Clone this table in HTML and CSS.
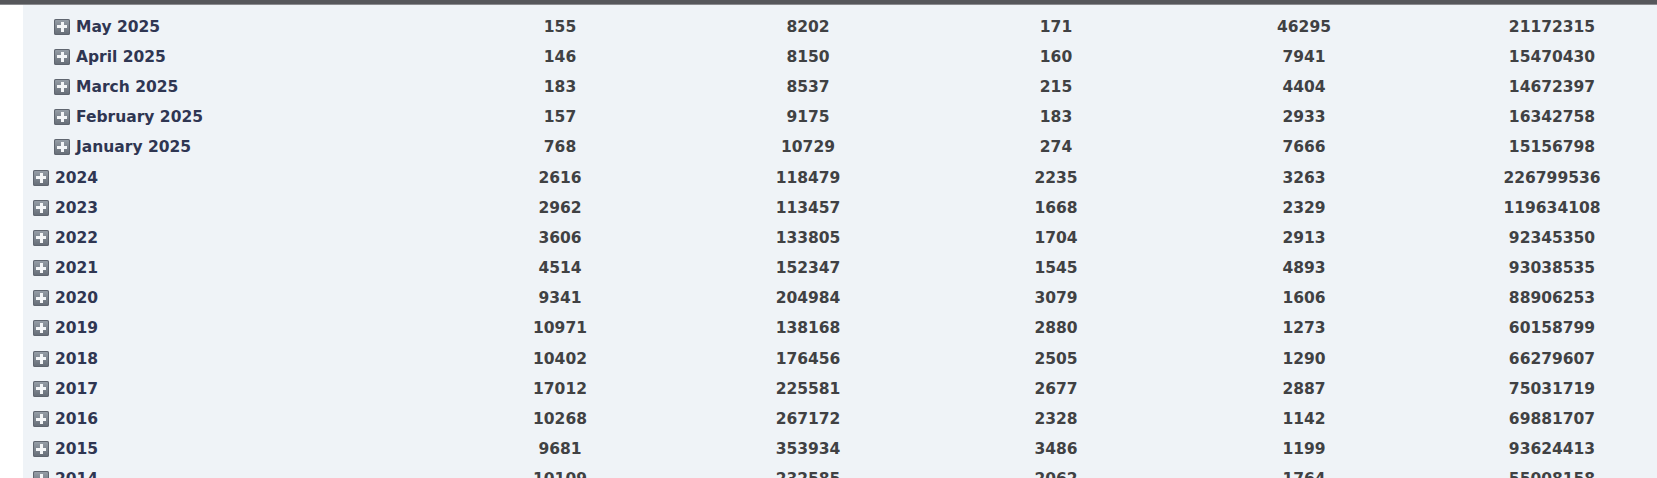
FILE: index.html
```html
<!DOCTYPE html>
<html>
<head>
<meta charset="utf-8">
<link rel="stylesheet" href="styles.css">
</head>
<body>
<div class="topbar"></div>
<div class="page">
  <div class="panel">
    <div class="row month"><div class="label"><span class="plus"></span>May 2025</div><div>155</div><div>8202</div><div>171</div><div>46295</div><div>21172315</div></div>
    <div class="row month"><div class="label"><span class="plus"></span>April 2025</div><div>146</div><div>8150</div><div>160</div><div>7941</div><div>15470430</div></div>
    <div class="row month"><div class="label"><span class="plus"></span>March 2025</div><div>183</div><div>8537</div><div>215</div><div>4404</div><div>14672397</div></div>
    <div class="row month"><div class="label"><span class="plus"></span>February 2025</div><div>157</div><div>9175</div><div>183</div><div>2933</div><div>16342758</div></div>
    <div class="row month"><div class="label"><span class="plus"></span>January 2025</div><div>768</div><div>10729</div><div>274</div><div>7666</div><div>15156798</div></div>
    <div class="row year"><div class="label"><span class="plus"></span>2024</div><div>2616</div><div>118479</div><div>2235</div><div>3263</div><div>226799536</div></div>
    <div class="row year"><div class="label"><span class="plus"></span>2023</div><div>2962</div><div>113457</div><div>1668</div><div>2329</div><div>119634108</div></div>
    <div class="row year"><div class="label"><span class="plus"></span>2022</div><div>3606</div><div>133805</div><div>1704</div><div>2913</div><div>92345350</div></div>
    <div class="row year"><div class="label"><span class="plus"></span>2021</div><div>4514</div><div>152347</div><div>1545</div><div>4893</div><div>93038535</div></div>
    <div class="row year"><div class="label"><span class="plus"></span>2020</div><div>9341</div><div>204984</div><div>3079</div><div>1606</div><div>88906253</div></div>
    <div class="row year"><div class="label"><span class="plus"></span>2019</div><div>10971</div><div>138168</div><div>2880</div><div>1273</div><div>60158799</div></div>
    <div class="row year"><div class="label"><span class="plus"></span>2018</div><div>10402</div><div>176456</div><div>2505</div><div>1290</div><div>66279607</div></div>
    <div class="row year"><div class="label"><span class="plus"></span>2017</div><div>17012</div><div>225581</div><div>2677</div><div>2887</div><div>75031719</div></div>
    <div class="row year"><div class="label"><span class="plus"></span>2016</div><div>10268</div><div>267172</div><div>2328</div><div>1142</div><div>69881707</div></div>
    <div class="row year"><div class="label"><span class="plus"></span>2015</div><div>9681</div><div>353934</div><div>3486</div><div>1199</div><div>93624413</div></div>
    <div class="row year"><div class="label"><span class="plus"></span>2014</div><div>10109</div><div>232585</div><div>2062</div><div>1764</div><div>55008158</div></div>
  </div>
</div>
</body>
</html>
```

FILE: styles.css
```css
html, body {
  margin: 0;
  padding: 0;
  background: #ffffff;
  overflow: hidden;
}
body {
  font-family: "DejaVu Sans", "Verdana", sans-serif;
  font-weight: bold;
  font-size: 15.5px;
}
.topbar {
  height: 4px;
  background: #56575b;
  border-bottom: 1px solid #8a8b8f;
}
.page {
  padding-left: 23px;
}
.panel {
  background: #eff3f7;
  padding-top: 6.5px;
  width: 1653px;
  box-sizing: border-box;
}
.row {
  display: grid;
  grid-template-columns: 413px repeat(5, 248px);
  height: 30.19px;
  align-items: center;
  color: #404143;
  text-align: center;
  white-space: nowrap;
}
.row .label {
  display: flex;
  align-items: center;
  text-align: left;
  color: #2f3652;
}
.month .label { padding-left: 31px; }
.year .label { padding-left: 10px; }
.plus {
  position: relative;
  display: inline-block;
  width: 16px;
  height: 16px;
  margin-right: 6px;
  border-radius: 2px;
  background: linear-gradient(#98a0a9, #646b75);
  box-shadow: inset 0 0 0 1px #5f656f;
  flex: none;
}
.plus::before,
.plus::after {
  content: "";
  position: absolute;
  background: #f4f6f8;
}
.plus::before {
  left: 3px;
  top: 6.5px;
  width: 10px;
  height: 3px;
}
.plus::after {
  left: 6.5px;
  top: 3px;
  width: 3px;
  height: 10px;
}
```
